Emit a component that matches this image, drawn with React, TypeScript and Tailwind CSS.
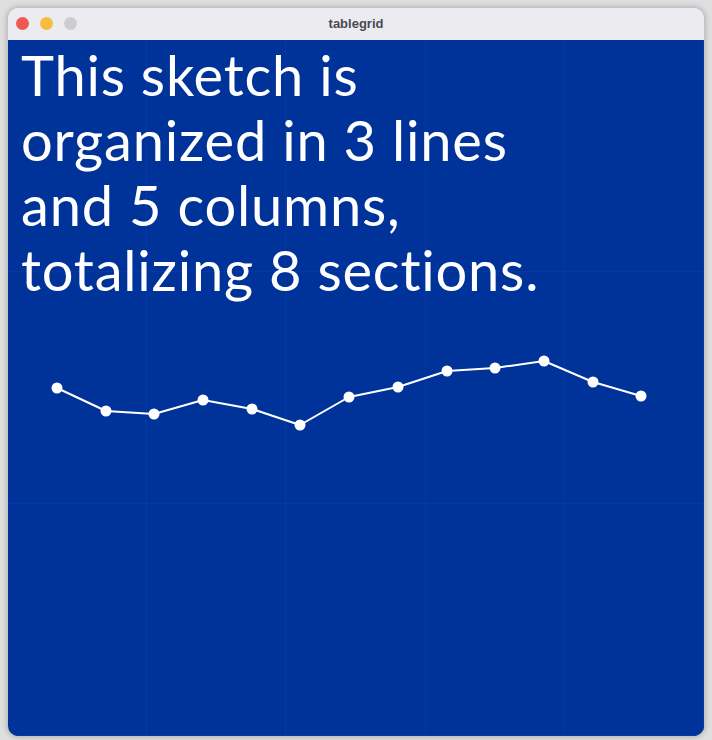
const points = [
  [57, 388], [106, 411], [154, 414], [203, 400], [252, 409], [300, 425], [349, 397],
  [398, 387], [447, 371], [495, 368], [544, 361], [593, 382], [641, 396],
];

// page y where the chart svg starts (content top 40 + text block 262)
const CHART_TOP = 302;

function LineChart() {
  const pts = points.map(([x, y]) => [x - 8, y - CHART_TOP]);
  const d = pts.map(([x, y], i) => `${i === 0 ? "M" : "L"}${x} ${y}`).join(" ");
  return (
    <svg width="696" height="150" viewBox="0 0 696 150" className="block">
      <path d={d} fill="none" stroke="#ffffff" strokeWidth="2" strokeLinejoin="round" />
      {pts.map(([x, y], i) => (
        <circle key={i} cx={x} cy={y} r="5.5" fill="#ffffff" />
      ))}
    </svg>
  );
}

export default function App() {
  return (
    <div className="w-[712px] h-[740px] bg-[#dedede] pt-2 px-2 pb-1">
      <div className="h-full rounded-[10px] overflow-hidden flex flex-col shadow-[0_0_0_1px_#c4c4c4,0_0_6px_rgba(0,0,0,0.3)]">
        <div className="h-8 shrink-0 bg-[#ecebf0] relative flex items-center justify-center">
          <div className="absolute left-[8px] top-[9px] flex gap-[11px]">
            <span className="w-[13px] h-[13px] rounded-full bg-[#ee5a52]" />
            <span className="w-[13px] h-[13px] rounded-full bg-[#f4bd3f]" />
            <span className="w-[13px] h-[13px] rounded-full bg-[#cdccd1]" />
          </div>
          <span className="text-[13px] font-bold text-[#4a4a4f] font-['Liberation_Sans',sans-serif]">
            tablegrid
          </span>
        </div>
        <div className="flex-1 bg-[#003399] relative">
          <div className="absolute inset-0 grid grid-cols-5 grid-rows-3">
            {Array.from({ length: 15 }).map((_, i) => (
              <div key={i} className="border-r border-b border-[#0637a3]" />
            ))}
          </div>
          <div className="relative">
            <p className="pl-[13px] pt-[2px] text-white text-[56px] leading-[65px] font-['Lato',sans-serif] tracking-[0.8px]">
              This sketch is
              <br />
              organized in 3 lines
              <br />
              and 5 columns,
              <br />
              totalizing 8 sections.
            </p>
            <LineChart />
          </div>
        </div>
      </div>
    </div>
  );
}
